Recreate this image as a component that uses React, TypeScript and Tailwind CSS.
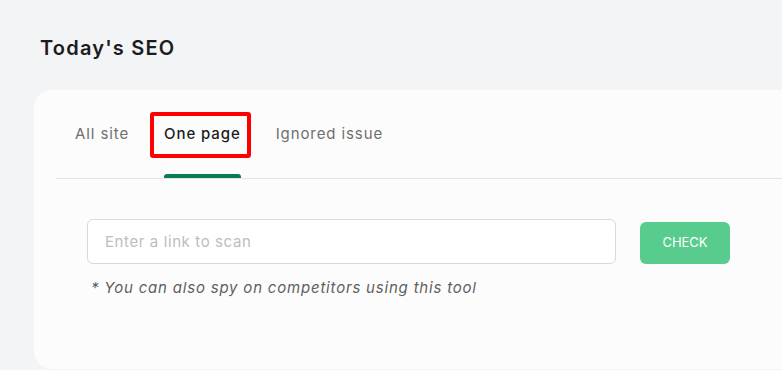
import { useState } from 'react';

const tabs = ['All site', 'One page', 'Ignored issue'];

export default function App() {
  const [active, setActive] = useState('One page');
  const [link, setLink] = useState('');

  return (
    <main
      className="h-[370px] w-[782px] overflow-hidden bg-[#f3f4f6] pl-[34px] pt-[35px]"
      style={{ fontFamily: 'Inter, "Liberation Sans", sans-serif' }}
    >
      <h1 className="ml-[6px] h-[26px] text-[20px] font-semibold leading-[26px] tracking-[1.2px] text-[#1c1c1c]">
        Today's SEO
      </h1>

      <div className="mt-[29px] h-[279px] w-[800px] rounded-l-[18px] bg-[#fcfcfc] pl-[22px] pt-[22px]">
        <div className="flex border-b border-[#e4e4e4] pl-[19px]">
          <div className="flex gap-[35px]">
            {tabs.map((tab) => (
              <button
                key={tab}
                onClick={() => setActive(tab)}
                className={`relative flex h-[66px] flex-col justify-start pt-[12px] text-[15px] leading-[20px] tracking-[0.9px] ${
                  active === tab ? 'font-medium text-[#1b1b1b]' : 'text-[#6f6f6f]'
                }`}
              >
                <span className="block">{tab}</span>
                {active === tab && (
                  <>
                    <span className="absolute -left-[14px] -right-[10px] top-0 h-[46px] rounded-[3px] border-[4px] border-[#ff0000]" />
                    <span className="absolute bottom-0 left-0 right-0 h-[4px] rounded-t-[3px] bg-[#0a7a5a]" />
                  </>
                )}
              </button>
            ))}
          </div>
        </div>

        <div className="pl-[31px] pt-[40px]">
          <div className="flex items-end gap-[24px]">
            <input
              value={link}
              onChange={(e) => setLink(e.target.value)}
              placeholder="Enter a link to scan"
              className="h-[45px] w-[529px] rounded-[6px] border border-[#d9d9d9] bg-white px-[17px] text-[15px] tracking-[0.6px] text-[#333] outline-none placeholder:text-[#bdbdbd]"
            />
            <button className="h-[42px] w-[90px] rounded-[6px] bg-[#58cc8c] text-[13px] text-white">
              CHECK
            </button>
          </div>
          <p className="ml-[4px] mt-[14px] text-[15px] italic leading-[20px] tracking-[0.8px] text-[#5f5f5f]">
            * You can also spy on competitors using this tool
          </p>
        </div>
      </div>
    </main>
  );
}
